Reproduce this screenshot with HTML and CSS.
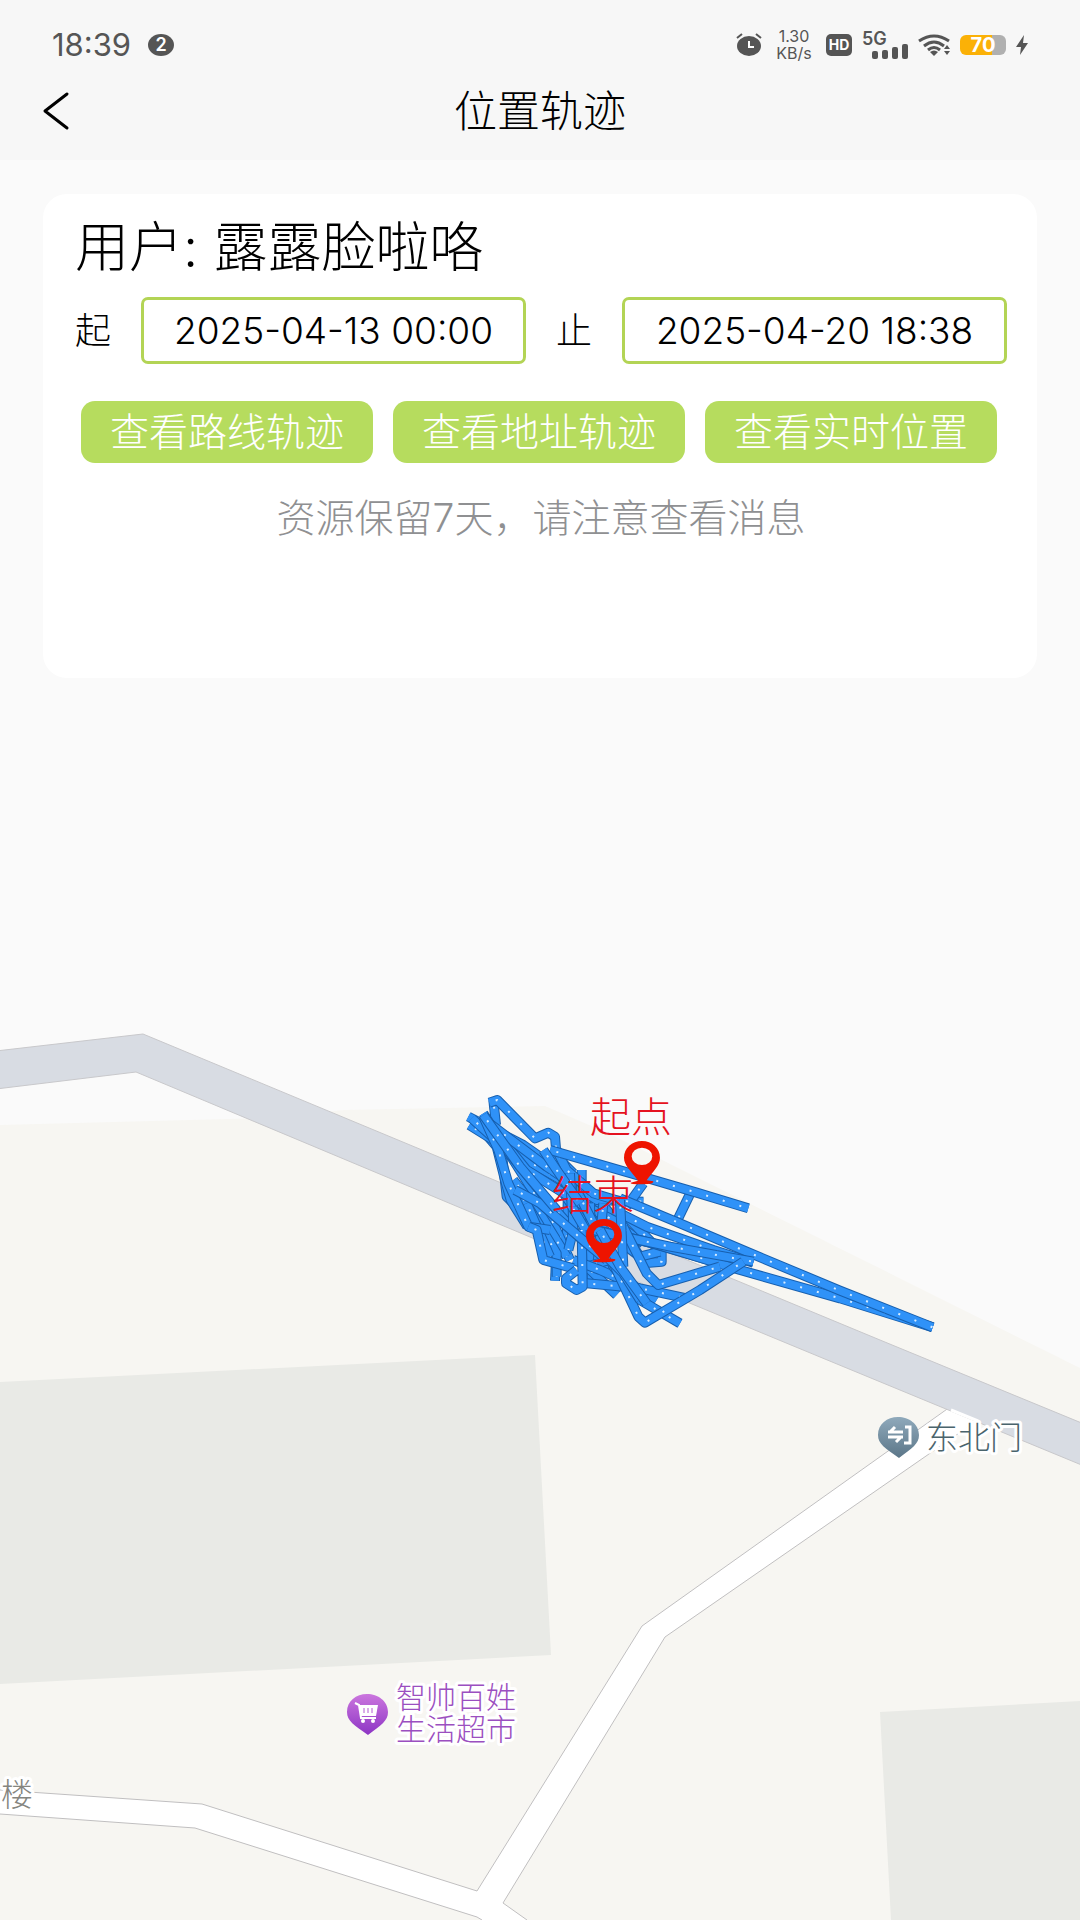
FILE: index.html
```html
<!DOCTYPE html>
<html lang="zh-CN">
<head>
    <meta charset="UTF-8">
    <meta name="viewport" content="width=device-width, initial-scale=1.0">
    <title>位置轨迹</title>
    <link rel="stylesheet" href="styles.css">
</head>
<body>

<header class="top">
    <div class="status-bar">
        <span class="clock">18:39</span>
        <span class="badge">2</span>
        <div class="status-icons">
            <svg class="alarm" width="26" height="24" viewBox="0 0 26 24">
                <ellipse cx="13" cy="13" rx="12" ry="10" fill="#555"/>
                <path d="M1 5 L6 1 M25 5 L20 1" stroke="#555" stroke-width="2"/>
                <path d="M13 8 V14 H18" fill="none" stroke="#fff" stroke-width="2"/>
            </svg>
            <div class="speed"><span>1.30</span><span>KB/s</span></div>
            <span class="hd">HD</span>
            <div class="signal">
                <span class="net">5G</span>
                <svg width="36" height="16" viewBox="0 0 36 16" fill="#555">
                    <rect x="0" y="8" width="6" height="8" rx="2"/>
                    <rect x="10" y="7" width="6" height="9" rx="2"/>
                    <rect x="20" y="4" width="6" height="12" rx="2"/>
                    <rect x="30" y="1" width="6" height="15" rx="2"/>
                </svg>
            </div>
            <svg class="wifi" width="32" height="22" viewBox="0 0 32 22">
                <g fill="none" stroke="#555" stroke-width="3">
                    <path d="M1 7 Q16 -3 31 7"/>
                    <path d="M6 12 Q16 4 26 12"/>
                    <path d="M10 16 Q16 11 22 16"/>
                </g>
                <path d="M12 18 Q16 15 20 18 L16 22 Z" fill="#555"/>
                <path d="M26 15 L29 11 L32 15 Z M26 17 L29 21 L32 17 Z" fill="#555"/>
            </svg>
            <div class="battery"><span>70</span></div>
            <svg class="bolt" width="12" height="20" viewBox="0 0 12 20">
                <path d="M8 0 L0 12 H5 L4 20 L12 8 H7 Z" fill="#555"/>
            </svg>
        </div>
    </div>
    <nav class="nav-bar">
        <button type="button" class="back" aria-label="返回">
            <svg width="28" height="40" viewBox="0 0 28 40">
                <path d="M25 3 L3 20 L25 37" fill="none" stroke="#000" stroke-width="3" stroke-linecap="round" stroke-linejoin="round"/>
            </svg>
        </button>
        <h1>位置轨迹</h1>
    </nav>
</header>

<section class="card">
    <h2>用户: 露露脸啦咯</h2>
    <div class="date-row">
        <label for="startTime">起</label>
        <input type="text" id="startTime" value="2025-04-13 00:00">
        <label for="endTime">止</label>
        <input type="text" id="endTime" value="2025-04-20 18:38">
    </div>
    <div class="actions">
        <button type="button">查看路线轨迹</button>
        <button type="button">查看地址轨迹</button>
        <button type="button">查看实时位置</button>
    </div>
    <p class="hint">资源保留7天，请注意查看消息</p>
</section>

<svg class="map" viewBox="0 678 1080 1242">
    <defs>
        <linearGradient id="gateFill" x1="0" y1="0" x2="0" y2="1">
            <stop offset="0" stop-color="#8fa9bb"/>
            <stop offset="1" stop-color="#5b7688"/>
        </linearGradient>
        <linearGradient id="shopFill" x1="0" y1="0" x2="0" y2="1">
            <stop offset="0" stop-color="#cb76de"/>
            <stop offset="1" stop-color="#8d35c4"/>
        </linearGradient>
        <path id="poi" d="M20 0 C31 0 41 7 41 18 C41 27 34 31 21 41 C7 31 0 27 0 18 C0 7 9 0 20 0 Z"/>
        <path id="marker" fill-rule="evenodd" d="M54 0 C84 0 108 22 108 50 C108 74 88 90 68 118 L88 121 Q92 130 54 130 Q16 130 20 125 L42 119 C22 90 0 74 0 50 C0 22 24 0 54 0 Z M54 20 A31 26 0 1 0 54 72 A31 26 0 1 0 54 20 Z"/>
    </defs>

    <!-- land and buildings -->
    <path class="land" d="M0 1125 L270 1118 L344 1110 L545 1106 L610 1134 L1080 1368 V1920 H0 Z"/>
    <path class="building" d="M0 1382 L535 1355 L551 1655 L0 1684 Z"/>
    <path class="building" d="M880 1712 L1080 1701 V1920 H891 Z"/>

    <!-- roads -->
    <path class="path-fill" d="M0 1790 L202 1804 L477 1891 L642 1626 L948 1408 L978 1420 L665 1637 L503 1903 L527 1920 H482 L477 1917 L195 1828 L0 1814 Z"/>
    <path class="path-edge" d="M0 1790 L202 1804 L477 1891 L642 1626 L950 1407 M978 1420 L665 1637 L503 1903 L527 1920 M482 1920 L477 1917 L195 1828 L0 1814"/>
    <path class="road" d="M-4 1051 L143 1034 L499 1182 L880 1340 L1084 1424 V1466 L820 1357 L530 1237 L136 1072 L-4 1089 Z"/>
    <path class="road-gap" d="M951 1410 L978 1421"/>

    <!-- tracks, three units to one map pixel -->
    <svg class="tracks" id="tracks" x="440" y="1070" width="340" height="280" viewBox="0 0 1020 840"></svg>

    <g class="marker">
        <use href="#marker" transform="translate(624 1141) scale(.333)"/>
        <text x="590" y="1132">起点</text>
        <use href="#marker" transform="translate(586 1219) scale(.333)"/>
        <text x="552" y="1210">结束</text>
    </g>

    <g transform="translate(878 1417)">
        <use href="#poi" fill="url(#gateFill)"/>
        <path d="M10 15 H25 M17 10 L12 15 M10 20 H25 M18 25 L23 20 M27 10 H32 V26 H26" fill="none" stroke="#fff" stroke-width="3"/>
    </g>
    <text class="poi-name gate" x="926" y="1449">东北门</text>

    <g transform="translate(347 1694)">
        <use href="#poi" fill="url(#shopFill)"/>
        <path d="M8 9 L12 11 L14 24 H29" fill="none" stroke="#fff" stroke-width="2"/>
        <path d="M12 11 H31 L29 22 H14 Z" fill="#fff"/>
        <path d="M17 14 V19 M21 14 V19 M25 14 V19" stroke="#b45bd2" stroke-width="1"/>
        <circle cx="16" cy="27" r="2" fill="#fff"/>
        <circle cx="26" cy="27" r="2" fill="#fff"/>
    </g>
    <text class="poi-name shop" x="396" y="1708">智帅百姓</text>
    <text class="poi-name shop" x="396" y="1740">生活超市</text>
    <text class="poi-name block" x="1" y="1806">楼</text>
</svg>

<script>
    const tracks = [
        'M345 632 L350 530',
        'M385 320 L380 520 L345 560',
        'M425 300 L425 400',
        'M180 200 L200 380 L300 480',
        'M250 300 L310 420 L360 560',
        'M350 340 L440 470 L500 610',
        'M420 360 L500 440 L610 520',
        'M470 380 L540 470 L600 560',
        'M160 90 L168 165',
        'M148 98 L172 90 L285 205 L325 188 L345 200 L350 260 L400 310',
        'M110 160 L170 230 L195 330 L212 390 L262 470',
        'M88 165 L240 260 L400 350 L480 400',
        'M85 140 L250 225 L400 330',
        'M130 130 L220 270 L340 460 L390 570',
        'M95 145 L200 240 L330 400 L470 560',
        'M130 140 L260 300 L420 400 L560 470',
        'M135 150 L320 290 L470 390 L610 395',
        'M220 330 L300 430 L380 560',
        'M240 370 L350 550 L350 620',
        'M260 400 L330 560',
        'M330 250 L420 380 L480 490 L520 590',
        'M395 310 L400 480 L385 540',
        'M450 400 L455 630',
        'M490 400 L470 610',
        'M350 240 L380 300 L460 370 L560 400',
        'M560 440 L665 548 L665 575 L610 580',
        'M480 470 L600 560 L660 545',
        'M540 560 L440 590 L530 675',
        'M400 570 L480 600 L570 640 L650 690',
        'M420 380 L470 480 L600 510 L840 580',
        'M520 420 L620 470 L820 540 L940 578',
        'M460 480 L640 520 L900 600 L1200 685 L1478 772',
        'M610 340 L560 410',
        'M750 372 L705 465',
        'M330 240 L600 318 L770 368 L925 415',
        'M540 385 L720 460 L920 545 L1200 662 L1478 772',
        'M550 500 L690 530 L940 575',
        'M440 640 L600 655 L740 685',
        'M520 590 L600 690 L720 760',
        'M840 590 L655 645 L620 610 L550 470',
        'M910 575 L780 660 L615 758 L595 740 L520 580',
        'M540 390 L550 590',
        'M390 400 L460 520 L550 610 L600 690',
        'M130 140 L175 240 L205 340 L265 470 L330 480',
        'M265 470 L290 480 L310 570 L400 595',
        'M410 600 L378 625 L378 640 L410 660 L428 650 L425 480',
        'M225 360 L300 400 L440 520 L500 570',
        'M130 135 L240 290 L350 420',
        'M390 310 L395 410',
        'M310 240 L350 300 L420 400',
        'M480 480 L540 590 L620 700'
    ];

    // Each track is an outline, a body and a row of white dots
    const layer = document.getElementById('tracks');
    tracks.forEach(d => {
        ['track-edge', 'track-body', 'track-dots'].forEach(name => {
            const path = document.createElementNS('http://www.w3.org/2000/svg', 'path');
            path.setAttribute('d', d);
            path.setAttribute('class', name);
            layer.appendChild(path);
        });
    });
</script>

</body>
</html>
```

FILE: styles.css
```css
* {
    box-sizing: border-box;
}
body {
    font-family: Inter, "Noto Sans CJK SC", sans-serif;
    font-weight: 300;
    background-color: #fafafa;
    color: #000;
    margin: 0;
}
h1, h2, p {
    margin: 0;
    font-weight: 300;
}
input, button {
    font-family: inherit;
    font-weight: 300;
}
.top {
    background-color: #f7f7f7;
    padding: 22px 0 6px;
}
.status-bar {
    display: flex;
    align-items: center;
    height: 46px;
    padding: 0 52px;
    color: #555;
}
.clock {
    font-size: 31px;
    font-weight: 400;
    line-height: 40px;
}
.badge {
    width: 26px;
    height: 22px;
    margin-left: 17px;
    border-radius: 50%;
    background-color: #555;
    color: #fff;
    font-size: 18px;
    font-weight: 600;
    line-height: 22px;
    text-align: center;
}
.status-icons {
    display: flex;
    align-items: center;
    gap: 10px;
    margin-left: auto;
}
.speed {
    display: flex;
    flex-direction: column;
    align-items: center;
    width: 44px;
    font-size: 16px;
    font-weight: 400;
    line-height: 17px;
}
.hd {
    width: 26px;
    height: 22px;
    border-radius: 5px;
    background-color: #555;
    color: #fff;
    font-size: 14px;
    font-weight: 700;
    line-height: 22px;
    text-align: center;
}
.signal {
    display: flex;
    flex-direction: column;
    width: 46px;
}
.signal svg {
    align-self: flex-end;
    margin-top: -3px;
}
.net {
    font-size: 18px;
    font-weight: 600;
    line-height: 15px;
}
.battery {
    width: 46px;
    height: 20px;
    border-radius: 6px;
    background: linear-gradient(to right, #fbb107 70%, #b0b0b0 70%);
    color: #fff;
    font-size: 20px;
    font-weight: 700;
    line-height: 20px;
    text-align: center;
}
.nav-bar {
    display: grid;
    grid-template-columns: 70px 1fr 70px;
    align-items: center;
    height: 86px;
}
.nav-bar h1 {
    font-size: 43px;
    line-height: 60px;
    text-align: center;
}
.back {
    display: flex;
    justify-content: flex-end;
    padding: 0;
    border: none;
    background: none;
    cursor: pointer;
}
.card {
    margin: 34px 43px 0;
    padding: 22px 30px 132px 32px;
    border-radius: 24px;
    background-color: #fff;
}
.card h2 {
    font-size: 54px;
    line-height: 64px;
}
.date-row {
    display: flex;
    align-items: center;
    gap: 30px;
    margin-top: 17px;
}
.date-row label {
    font-size: 36px;
    line-height: 48px;
}
.date-row input {
    flex: 1;
    min-width: 0;
    height: 67px;
    padding: 0;
    border: 3px solid #b3d455;
    border-radius: 7px;
    background-color: #fff;
    color: #000;
    font-size: 37px;
    text-align: center;
}
.actions {
    display: grid;
    grid-template-columns: repeat(3, 1fr);
    gap: 20px;
    margin-top: 37px;
    padding: 0 10px 0 6px;
}
.actions button {
    height: 62px;
    padding: 0;
    border: none;
    border-radius: 14px;
    background-color: #b6dc5e;
    color: #fff;
    font-size: 39px;
    line-height: 56px;
    cursor: pointer;
}
.hint {
    margin-top: 27px;
    color: #8f9092;
    font-size: 39px;
    line-height: 56px;
    text-align: center;
}
.map {
    display: block;
    width: 100%;
    height: auto;
}
.land {
    fill: #f7f6f2;
}
.building {
    fill: #e9eae6;
}
.path-fill {
    fill: #fff;
}
.path-edge {
    fill: none;
    stroke: #c0bfc0;
    stroke-width: 1px;
}
.road {
    fill: #d8dce3;
    stroke: #c8c8cb;
    stroke-width: 1px;
}
.road-gap {
    stroke: #fff;
    stroke-width: 3px;
}
.tracks {
    overflow: visible;
    fill: none;
    stroke-linejoin: round;
}
.track-edge {
    stroke: #175fae;
    stroke-width: 30px;
}
.track-body {
    stroke: #2f92f8;
    stroke-width: 24px;
}
.track-dots {
    stroke: #d6ebff;
    stroke-width: 6px;
    stroke-dasharray: 6px 46px;
    stroke-dashoffset: -20px;
}
.marker {
    fill: #ee1400;
}
.marker text {
    fill: #e51220;
    font-size: 41px;
}
.poi-name {
    font-size: 32px;
    stroke: #fff;
    stroke-width: 6px;
    stroke-linejoin: round;
    paint-order: stroke;
}
.gate {
    fill: #4a646c;
}
.poi-name.shop {
    fill: #9b4fc0;
    font-size: 30px;
}
.block {
    fill: #85857f;
}
```
